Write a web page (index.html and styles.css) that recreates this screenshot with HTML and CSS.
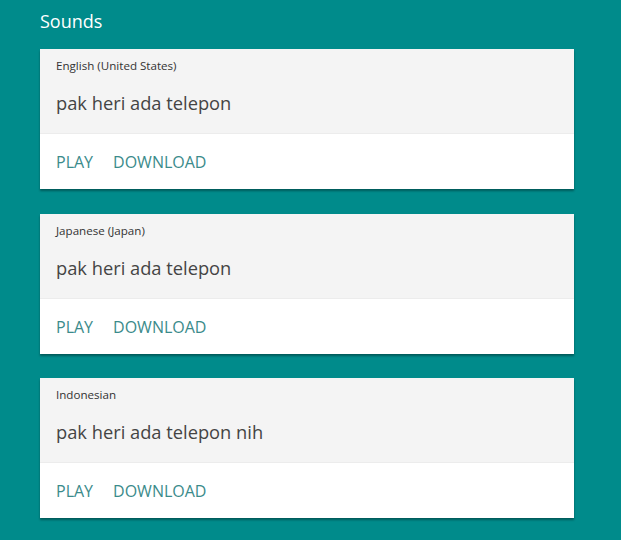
FILE: index.html
```html
<!DOCTYPE html>
<html>
<head>
<meta charset="utf-8">
<link rel="stylesheet" href="styles.css">
</head>
<body>
<div class="page">
  <h1 class="title">Sounds</h1>
  <div class="list">
    <div class="card">
      <div class="card-head">
        <div class="lang">English (United States)</div>
        <div class="phrase">pak heri ada telepon</div>
      </div>
      <div class="card-actions">
        <span class="btn">PLAY</span>
        <span class="btn">DOWNLOAD</span>
      </div>
    </div>
    <div class="card">
      <div class="card-head">
        <div class="lang">Japanese (Japan)</div>
        <div class="phrase">pak heri ada telepon</div>
      </div>
      <div class="card-actions">
        <span class="btn">PLAY</span>
        <span class="btn">DOWNLOAD</span>
      </div>
    </div>
    <div class="card">
      <div class="card-head">
        <div class="lang">Indonesian</div>
        <div class="phrase">pak heri ada telepon nih</div>
      </div>
      <div class="card-actions">
        <span class="btn">PLAY</span>
        <span class="btn">DOWNLOAD</span>
      </div>
    </div>
  </div>
</div>
</body>
</html>
```
FILE: styles.css
```css
html, body {
  margin: 0;
  padding: 0;
  background: #008b8b;
}
body {
  font-family: "Open Sans", "Noto Sans", sans-serif;
  height: 540px;
  overflow: hidden;
}
.page {
  padding: 8px 47px 0 40px;
}
.title {
  margin: 0;
  font-size: 18px;
  line-height: 26px;
  font-weight: 400;
  color: #ffffff;
  height: 41px;
}
.list {
  display: flex;
  flex-direction: column;
  gap: 24.5px;
}
.card {
  background: #ffffff;
  box-shadow: 0 2px 2px rgba(0, 0, 0, 0.35);
  height: 140px;
  display: flex;
  flex-direction: column;
}
.card-head {
  background: #f4f4f4;
  padding: 9px 16px 0 16px;
  height: 75px;
  border-bottom: 1px solid #ececec;
}
.lang {
  font-size: 11.6px;
  line-height: 16px;
  color: #333333;
}
.phrase {
  margin-top: 17px;
  font-size: 18.3px;
  line-height: 24px;
  color: #444444;
}
.card-actions {
  display: flex;
  gap: 20px;
  padding: 16px 16px 0 16px;
}
.btn {
  font-size: 16px;
  line-height: 24px;
  color: #3b8b8b;
}
```
